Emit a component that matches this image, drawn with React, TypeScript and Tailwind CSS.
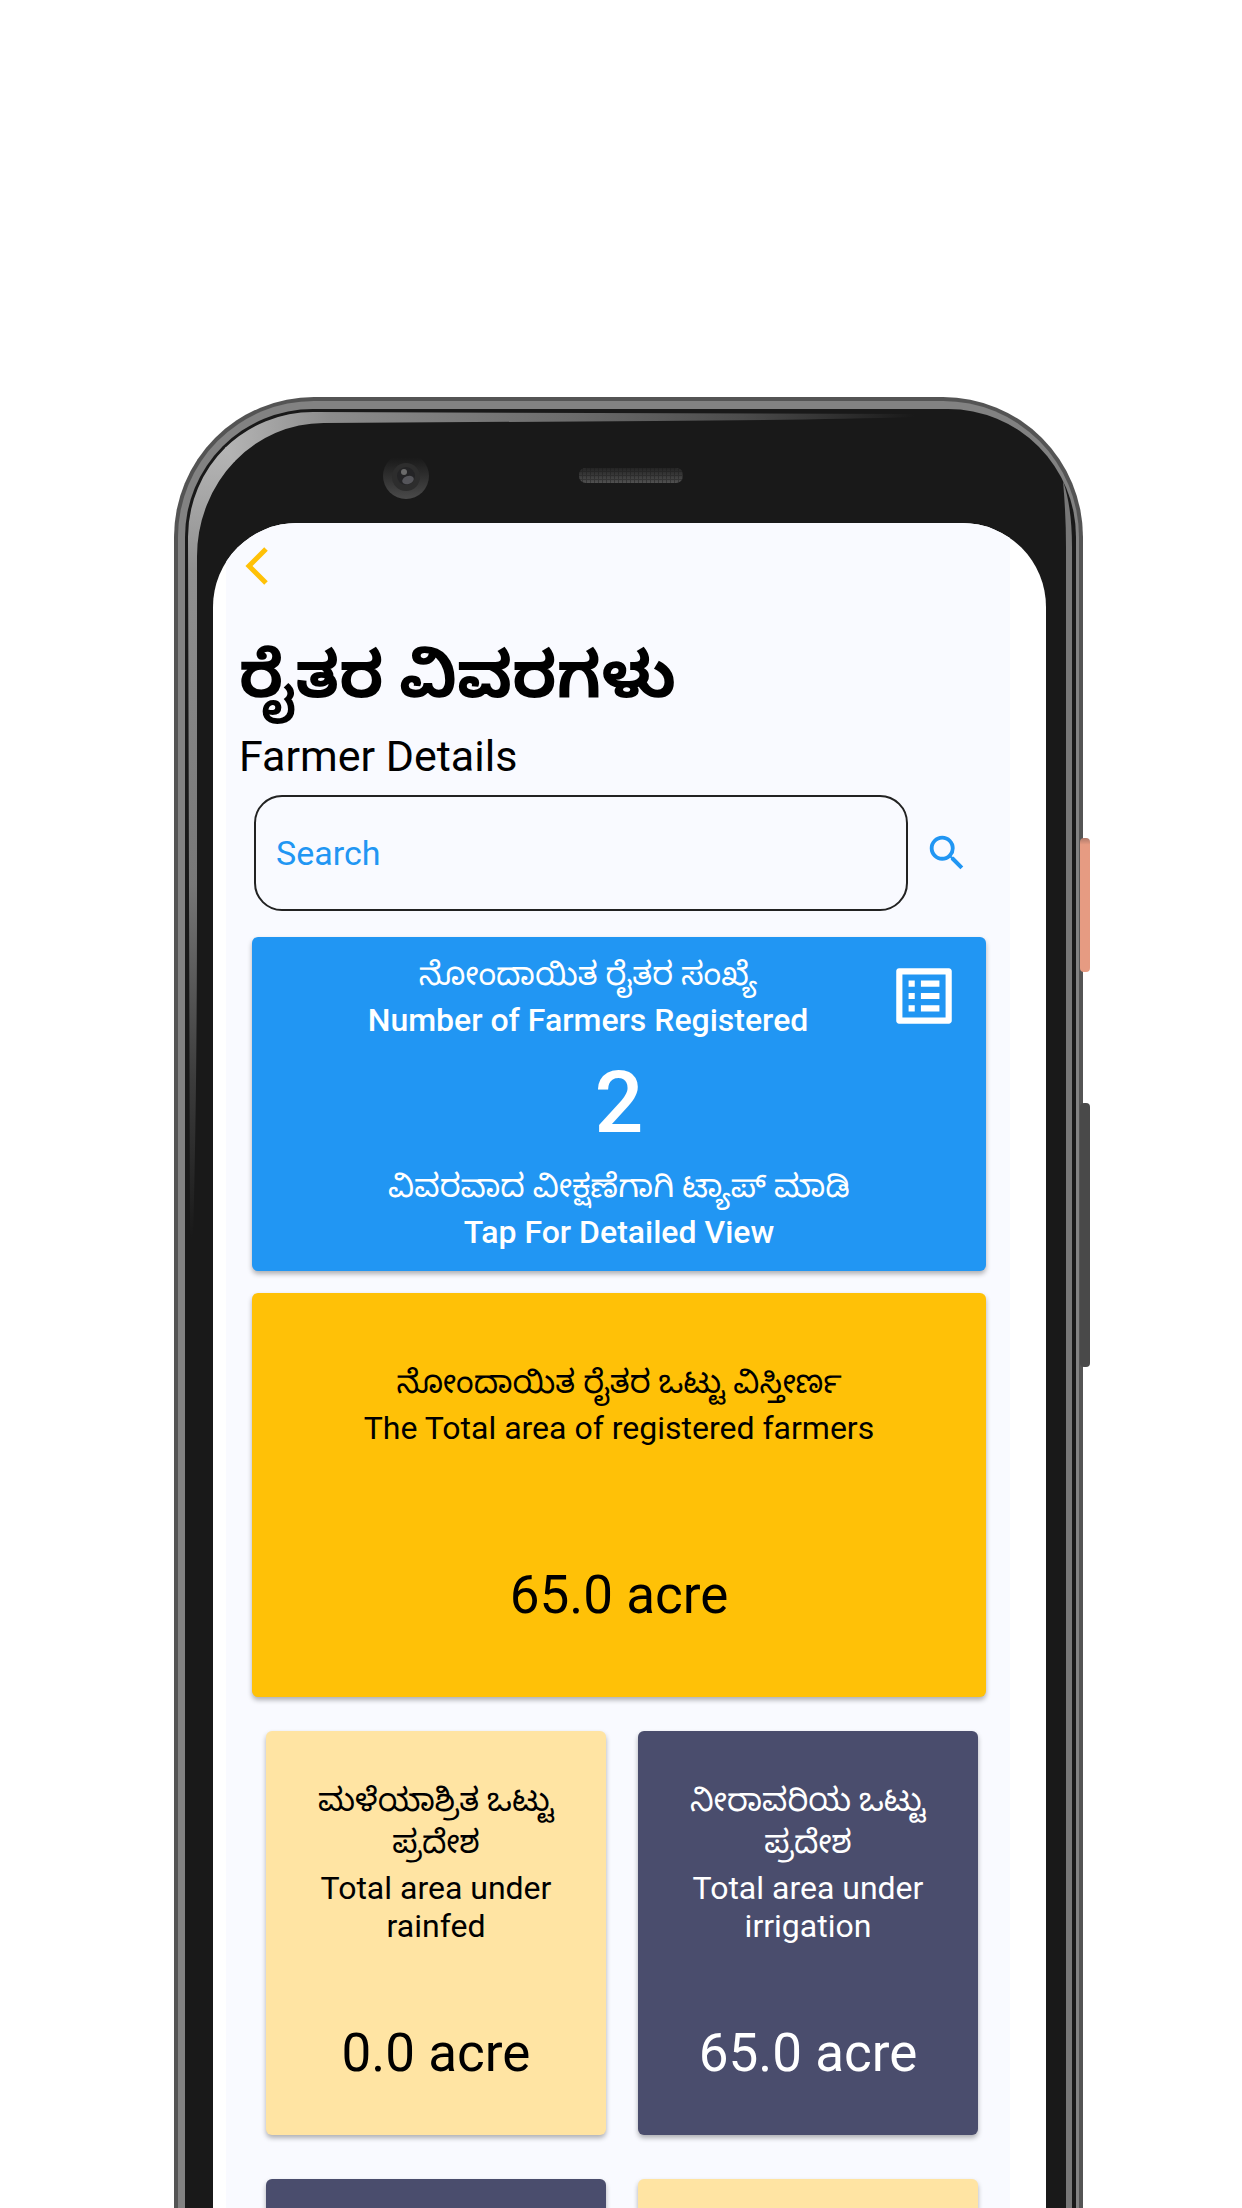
import React from "react";
import { MdSearch, MdListAlt } from "react-icons/md";

function LeftShine() {
  return (
    <svg
      aria-hidden="true"
      className="pointer-events-none absolute top-0 left-0 h-[860px] w-[780px]"
      viewBox="0 0 780 860"
    >
      <defs>
        <linearGradient id="topShine" gradientUnits="userSpaceOnUse" x1="54" y1="0" x2="740" y2="0">
          <stop offset="0" stopColor="#b4b4b4" />
          <stop offset="0.15" stopColor="#8c8c8c" />
          <stop offset="0.5" stopColor="#6c6c6c" />
          <stop offset="0.75" stopColor="#4c4c4c" />
          <stop offset="1" stopColor="#191919" />
        </linearGradient>
        <linearGradient id="sideShine" gradientUnits="userSpaceOnUse" x1="0" y1="56" x2="0" y2="840">
          <stop offset="0" stopColor="#b4b4b4" />
          <stop offset="0.15" stopColor="#909090" />
          <stop offset="0.55" stopColor="#777" />
          <stop offset="0.8" stopColor="#3c3c3c" />
          <stop offset="1" stopColor="#191919" />
        </linearGradient>
      </defs>
      <path d="M51 51 A126 126 0 0 1 140 15 L740 17 L740 20 Q640 23 480 24 L150 26 A127 134 0 0 0 60 65 Z" fill="url(#topShine)" />
      <path d="M52 50 A126 126 0 0 0 14 140 L16 840 L19 840 Q23 700 23 500 L23 160 A127 134 0 0 1 61 64 Z" fill="url(#sideShine)" />
    </svg>
  );
}

function RightShine() {
  return (
    <>
      <svg aria-hidden="true" className="absolute top-[84px] right-[10px] h-[66px] w-3" viewBox="0 0 12 66">
        <path d="M2 0 Q11 26 11 66 L5 66 Q5 34 2 0 Z" fill="#777" />
      </svg>
      <div className="absolute top-[150px] right-[11px] bottom-0 w-1.5 bg-[#777]" />
    </>
  );
}

function Camera() {
  return (
    <svg aria-hidden="true" className="absolute top-[55px] left-[208px] size-12" viewBox="0 0 48 48">
      <defs>
        <linearGradient id="lens" x1="0" y1="0" x2="0" y2="1">
          <stop offset="0.1" stopColor="#191919" />
          <stop offset="1" stopColor="#4a4a4a" />
        </linearGradient>
      </defs>
      <circle cx="24" cy="24" r="23" fill="url(#lens)" />
      <circle cx="24" cy="25" r="14" fill="#2d2d2d" />
      <circle cx="24" cy="24" r="9" fill="#242426" />
      <ellipse cx="26" cy="28" rx="6" ry="4" fill="#55555a" transform="rotate(-20 26 28)" />
      <circle cx="22" cy="20" r="3" fill="#6b6b6b" />
    </svg>
  );
}

function Speaker() {
  return (
    <svg aria-hidden="true" className="absolute top-[71px] left-[405px] h-4 w-[104px]" viewBox="0 0 104 16">
      <defs>
        <pattern id="mesh" width="4" height="4" patternUnits="userSpaceOnUse">
          <rect width="4" height="4" fill="#3a3a3a" />
          <rect width="3" height="3" fill="#505050" />
        </pattern>
        <linearGradient id="meshFade" x1="0" y1="0" x2="0" y2="1">
          <stop offset="0" stopColor="#191919" stopOpacity="0.8" />
          <stop offset="1" stopColor="#191919" stopOpacity="0" />
        </linearGradient>
      </defs>
      <rect width="104" height="15" rx="7" fill="url(#mesh)" />
      <rect width="104" height="15" rx="7" fill="url(#meshFade)" />
    </svg>
  );
}

function BackChevron() {
  return (
    <svg aria-hidden="true" className="h-10 w-6" viewBox="0 0 24 40" fill="none" stroke="currentColor" strokeWidth="5">
      <path d="M21 3 L4 20 L21 37" />
    </svg>
  );
}

type AreaCardProps = {
  local: string;
  english: string;
  value: string;
  className: string;
};

function AreaCard({ local, english, value, className }: AreaCardProps) {
  return (
    <article
      className={`flex h-[404px] flex-col items-center justify-between rounded-md px-10 pt-12 pb-[52px] text-center shadow-[0_3px_5px_rgba(0,0,0,0.3)] ${className}`}
    >
      <div>
        <p className="text-[32px] leading-[42px]">{local}</p>
        <p className="mt-1.5 text-[32px] leading-[38px]">{english}</p>
      </div>
      <p className="text-[53px] leading-[60px]">{value}</p>
    </article>
  );
}

export default function App() {
  return (
    <main className="h-screen overflow-hidden bg-white pt-[397px] pr-[159px] pl-[174px] font-['Roboto','Noto_Sans_Kannada','Noto_Sans',sans-serif] text-black">
      <div className="relative">
        <div className="relative rounded-t-[140px] bg-[#545454] px-1 pt-1">
          <div className="rounded-t-[136px] bg-[#828282] pt-2 pr-[3px] pl-[7px]">
            <div className="rounded-t-[128px] bg-[#191919] pr-[30px] pl-7 pt-[114px]">
              <div className="overflow-hidden rounded-t-[84px] bg-white pr-9 pl-[13px]">
                <div className="bg-[#f9faff] pr-6 pl-[26px]">
                  <header className="-ml-[13px] pt-[21px]">
                    <button type="button" aria-label="Back" className="flex h-11 w-11 items-center pl-1.5 text-[#ffc107]">
                      <BackChevron />
                    </button>
                    <h1 className="mt-[50px] text-[64px] leading-[76px] font-bold">ರೈತರ ವಿವರಗಳು</h1>
                    <p className="mt-[17px] text-[43px] leading-[50px]">Farmer Details</p>
                  </header>

                  <form className="mt-3.5 flex items-center" onSubmit={(e) => e.preventDefault()}>
                    <input
                      type="search"
                      aria-label="Search"
                      placeholder="Search"
                      className="ml-0.5 h-[116px] min-w-0 flex-1 rounded-[28px] border-2 border-[#222] bg-transparent px-5 text-[34px] text-[#2196f3] outline-none placeholder:text-[#2196f3] placeholder:opacity-100"
                    />
                    <button type="submit" aria-label="Submit search" className="mr-4 ml-4 text-[#2196f3]">
                      <MdSearch className="size-[46px]" />
                    </button>
                  </form>

                  <button
                    type="button"
                    className="relative mt-[26px] flex h-[334px] w-full flex-col rounded-md bg-[#2196f3] pt-3.5 text-center text-white shadow-[0_3px_5px_rgba(0,0,0,0.3)]"
                  >
                    <span className="block w-full pr-[62px] text-[32px] leading-[46px]">ನೋಂದಾಯಿತ ರೈತರ ಸಂಖ್ಯೆ</span>
                    <span className="block w-full pr-[62px] text-[32px] leading-[46px] font-medium">Number of Farmers Registered</span>
                    <span className="mt-2.5 block w-full text-[86px] leading-[100px] font-medium">2</span>
                    <span className="mt-2.5 block w-full text-[32px] leading-[46px]">ವಿವರವಾದ ವೀಕ್ಷಣೆಗಾಗಿ ಟ್ಯಾಪ್ ಮಾಡಿ</span>
                    <span className="block w-full text-[32px] leading-[46px] font-medium">Tap For Detailed View</span>
                    <MdListAlt className="absolute top-[22px] right-[25px] size-[74px]" />
                  </button>

                  <article className="mt-[22px] h-[404px] rounded-md bg-[#ffc107] pt-[66px] text-center shadow-[0_3px_5px_rgba(0,0,0,0.3)]">
                    <p className="text-[32px] leading-[46px]">ನೋಂದಾಯಿತ ರೈತರ ಒಟ್ಟು ವಿಸ್ತೀರ್ಣ</p>
                    <p className="text-[32px] leading-[46px]">The Total area of registered farmers</p>
                    <p className="mt-[114px] text-[53px] leading-[60px]">65.0 acre</p>
                  </article>

                  <section className="mt-[34px] grid grid-cols-2 gap-x-8 gap-y-11 pr-2 pl-3.5">
                    <AreaCard local="ಮಳೆಯಾಶ್ರಿತ ಒಟ್ಟು ಪ್ರದೇಶ" english="Total area under rainfed" value="0.0 acre" className="bg-[#ffe4a3]" />
                    <AreaCard local="ನೀರಾವರಿಯ ಒಟ್ಟು ಪ್ರದೇಶ" english="Total area under irrigation" value="65.0 acre" className="bg-[#4a4d6d] text-white" />
                    <AreaCard local="" english="" value="" className="bg-[#4a4d6d] text-white" />
                    <AreaCard local="" english="" value="" className="bg-[#ffe4a3]" />
                  </section>
                </div>
              </div>
            </div>
          </div>
          <LeftShine />
          <RightShine />
          <Camera />
          <Speaker />
        </div>
        <div className="absolute top-[441px] -right-[7px] h-[134px] w-2.5 rounded bg-linear-to-b from-[#b07a6a] via-[#e69b82] via-5% to-[#e69b82]" />
        <div className="absolute top-[706px] -right-[7px] h-[264px] w-2.5 rounded bg-[#494949]" />
      </div>
    </main>
  );
}
